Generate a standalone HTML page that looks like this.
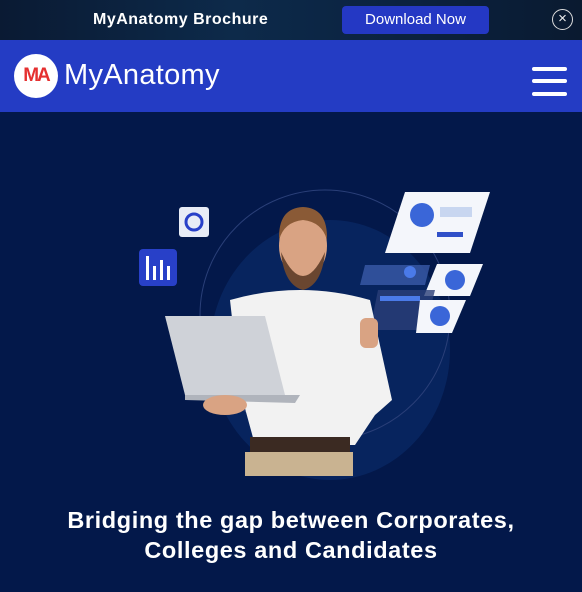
<!DOCTYPE html>
<html><head><style>
*{margin:0;padding:0;box-sizing:border-box}
body{width:582px;height:592px;overflow:hidden;background:#03184a;font-family:"Liberation Sans",sans-serif}
.top{position:absolute;left:0;top:0;width:582px;height:40px;background:linear-gradient(90deg,#0a1a33,#0d2a4a 40%,#0b2240 70%,#0a1a30)}
.top .t{position:absolute;left:93px;top:11px;color:#fff;font-weight:bold;font-size:16px;letter-spacing:.5px}
.top .b{position:absolute;left:342px;top:6px;width:147px;height:28px;background:#2438c4;border-radius:4px;color:#fff;font-size:15px;text-align:center;line-height:28px}
.top .x{position:absolute;left:552px;top:9px;width:21px;height:21px;border:1.5px solid #ddd;border-radius:50%;color:#eee;text-align:center;line-height:18px;font-size:15px}
.nav{position:absolute;left:0;top:40px;width:582px;height:72px;background:#243cc4}
.logo{position:absolute;left:14px;top:54px;width:44px;height:44px;border-radius:50%;background:#fff;color:#e53030;font-weight:900;font-size:19px;line-height:44px;text-align:center;letter-spacing:-2px}
.brand{position:absolute;left:64px;top:59px;color:#fff;font-size:29px;letter-spacing:.3px}
.hb{position:absolute;left:532px;width:35px;height:4px;background:#fff;border-radius:2px}
h1{position:absolute;left:0;top:505px;width:582px;text-align:center;color:#fff;font-size:23.5px;line-height:30px;font-weight:bold;letter-spacing:.6px}
</style></head><body>
<div class="top"><div class="t">MyAnatomy Brochure</div><div class="b">Download Now</div><div class="x">×</div></div>
<div class="nav"></div>
<div class="logo">MA</div>
<div class="brand">MyAnatomy</div>
<div class="hb" style="top:67px"></div><div class="hb" style="top:79px"></div><div class="hb" style="top:92px"></div>
<svg width="582" height="380" style="position:absolute;left:0;top:112px" viewBox="0 112 582 380">
<ellipse cx="330" cy="350" rx="120" ry="130" fill="#0a2a66" opacity=".7"/>
<circle cx="325" cy="315" r="125" fill="none" stroke="#2a3f78" stroke-width="1"/>
<rect x="179" y="207" width="30" height="30" rx="3" fill="#e8ecf6"/>
<circle cx="194" cy="222" r="8" fill="none" stroke="#2840c8" stroke-width="3"/>
<rect x="139" y="249" width="38" height="37" rx="4" fill="#2840c8"/>
<rect x="146" y="256" width="3" height="24" fill="#fff"/><rect x="153" y="266" width="3" height="14" fill="#fff"/><rect x="160" y="260" width="3" height="20" fill="#fff"/><rect x="167" y="266" width="3" height="14" fill="#fff"/>
<polygon points="405,192 490,192 470,253 385,253" fill="#f4f6fb"/>
<circle cx="422" cy="215" r="12" fill="#3a66d8"/>
<rect x="440" y="207" width="32" height="10" fill="#c8d6f0"/>
<rect x="437" y="232" width="26" height="5" fill="#3050c8"/>
<polygon points="365,265 430,265 425,285 360,285" fill="#3a5aa8" opacity=".8"/>
<circle cx="410" cy="272" r="6" fill="#4a7ae8"/>
<polygon points="437,264 483,264 470,296 424,296" fill="#f4f6fb"/>
<circle cx="455" cy="280" r="10" fill="#3a66d8"/>
<polygon points="378,290 435,290 425,330 370,330" fill="#2a3f78" opacity=".8"/>
<rect x="380" y="296" width="40" height="5" fill="#4a7ae8"/>
<polygon points="420,300 466,300 452,333 416,333" fill="#f4f6fb"/>
<circle cx="440" cy="316" r="10" fill="#3a66d8"/>
<path d="M230 300 Q300 280 370 300 L392 400 L375 415 L355 445 L255 445 L240 390 Z" fill="#f2f2f2"/>
<rect x="250" y="437" width="100" height="16" fill="#3b2a22"/>
<rect x="245" y="452" width="108" height="24" fill="#c9b391"/>
<ellipse cx="303" cy="246" rx="24" ry="32" fill="#d9a383"/>
<path d="M279 240 Q278 208 303 207 Q328 208 327 240 Q322 222 303 220 Q284 222 279 240Z" fill="#8a5a36"/>
<path d="M281 252 Q303 300 325 252 Q322 285 303 290 Q284 285 281 252Z" fill="#6a4630"/>
<rect x="360" y="318" width="18" height="30" rx="6" fill="#d9a383"/>
<polygon points="165,316 265,316 285,395 185,395" fill="#cfd2d8"/>
<polygon points="185,395 300,395 295,403 185,400" fill="#b0b4bc"/>
<ellipse cx="225" cy="405" rx="22" ry="10" fill="#d9a383"/>
</svg>
<h1>Bridging the gap between Corporates,<br>Colleges and Candidates</h1>
</body></html>
